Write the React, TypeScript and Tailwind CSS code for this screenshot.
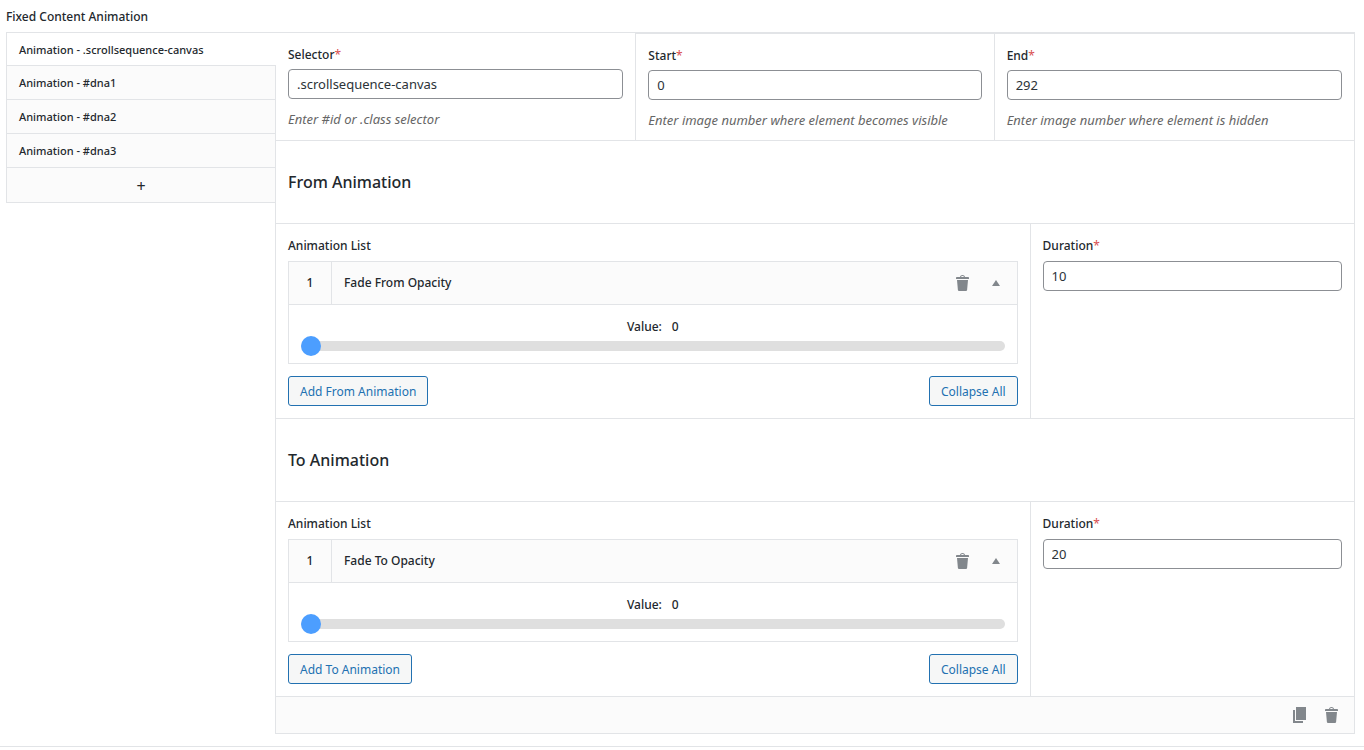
import React, { useState } from "react";

const tabs = ["Animation - .scrollsequence-canvas", "Animation - #dna1", "Animation - #dna2", "Animation - #dna3"];

function TrashIcon() {
  return (
    <svg className="size-5 fill-[#82878c]" viewBox="0 0 20 20" aria-hidden="true">
      <path d="M12 4h3c.6 0 1 .4 1 1v1H3V5c0-.6.5-1 1-1h3c.2-1.1 1.3-2 2.5-2s2.3.9 2.5 2zM8 4h3c-.2-.6-.9-1-1.5-1S8.2 3.4 8 4zM4 7h11l-.9 10.1c0 .5-.5.9-1 .9H5.9c-.5 0-.9-.4-1-.9L4 7z" />
    </svg>
  );
}

function CopyIcon() {
  return (
    <svg className="size-5 fill-[#82878c]" viewBox="0 0 20 20" aria-hidden="true">
      <path d="M6 15V2h10v13H6zm-1 1h8v2H3V5h2v11z" />
    </svg>
  );
}

function ArrowUpIcon() {
  return (
    <svg className="size-5 fill-[#82878c]" viewBox="0 0 20 20" aria-hidden="true">
      <path d="M7 13l4-6 4 6H7z" />
    </svg>
  );
}

type FieldProps = {
  id: string;
  label: string;
  value: string;
  hint?: string;
  labelClass?: string;
};

function Field({ id, label, value, hint, labelClass = "mb-1" }: FieldProps) {
  return (
    <>
      <label htmlFor={id} className={`block font-medium leading-5 ${labelClass}`}>
        {label}
        <span className="font-normal text-[#d94f4f]">*</span>
      </label>
      <input
        id={id}
        type="text"
        defaultValue={value}
        className="block h-[30px] w-full rounded-[4px] border border-[#8c8f94] bg-white px-2 text-[13px] text-[#2c3338]"
      />
      {hint && <p className="mt-2.5 text-[13px] leading-5 text-[#666] italic">{hint}</p>}
    </>
  );
}

function OutlineButton({ children }: { children: React.ReactNode }) {
  return (
    <button type="button" className="h-[30px] rounded-[3px] border border-[#2271b1] bg-[#f6f7f7] px-[11px] pt-0.5 text-[#2271b1]">
      {children}
    </button>
  );
}

type SectionProps = {
  id: string;
  title: string;
  item: string;
  addLabel: string;
  duration: string;
};

function AnimationSection({ id, title, item, addLabel, duration }: SectionProps) {
  const [value, setValue] = useState(0);

  return (
    <section>
      <h2 className="flex h-[83px] items-center border-t border-[#e2e4e7] px-3 text-base font-medium">{title}</h2>

      <div className="grid grid-cols-[7fr_3fr] border-t border-[#e2e4e7]">
        <div className="border-r border-[#e2e4e7] p-3">
          <h3 className="mb-[5px] leading-5 font-medium">Animation List</h3>

          <div className="border border-[#e2e4e7]">
            <div className="flex h-[43px] items-center border-b border-[#e2e4e7] bg-[#fbfbfb] font-medium">
              <span className="flex w-[43px] items-center justify-center self-stretch border-r border-[#e2e4e7]">1</span>
              <span className="flex-1 px-3">{item}</span>
              <div className="flex gap-3 pr-3">
                <button type="button" aria-label="Remove"><TrashIcon /></button>
                <button type="button" aria-label="Collapse"><ArrowUpIcon /></button>
              </div>
            </div>

            <div className="px-3 pt-3 pb-[7px]">
              <label htmlFor={`${id}-value`} className="flex justify-center gap-2.5 leading-[19px] font-medium">
                <span>Value:</span>
                <span>{value}</span>
              </label>
              <input
                id={`${id}-value`}
                type="range"
                min={0}
                max={100}
                value={value}
                onChange={(e) => setValue(Number(e.target.value))}
                className="block h-5 w-full appearance-none bg-transparent [&::-webkit-slider-runnable-track]:h-2.5 [&::-webkit-slider-runnable-track]:rounded-full [&::-webkit-slider-runnable-track]:bg-[#dfdfdf] [&::-webkit-slider-thumb]:-mt-[5px] [&::-webkit-slider-thumb]:size-5 [&::-webkit-slider-thumb]:appearance-none [&::-webkit-slider-thumb]:rounded-full [&::-webkit-slider-thumb]:bg-[#4c9eff]"
              />
            </div>
          </div>

          <div className="mt-3 flex justify-between">
            <OutlineButton>{addLabel}</OutlineButton>
            <OutlineButton>Collapse All</OutlineButton>
          </div>
        </div>

        <div className="p-3">
          <Field id={`${id}-duration`} label="Duration" value={duration} labelClass="mb-[5px]" />
        </div>
      </div>
    </section>
  );
}

export default function App() {
  const [active, setActive] = useState(0);

  return (
    <div className="border-b border-[#e2e4e7] bg-white pt-[7px] pr-[9px] pb-3 pl-1.5 font-['Noto_Sans','Open_Sans',sans-serif] text-[12px] text-[#23282d]">
      <h1 className="mb-[5px] leading-5 font-medium">Fixed Content Animation</h1>

      <div className="flex items-start">
        <nav className="flex w-[270px] shrink-0 flex-col border-t border-[#e2e4e7]">
          {tabs.map((tab, i) => (
            <button
              key={tab}
              type="button"
              onClick={() => setActive(i)}
              className={
                i === active
                  ? "relative z-10 h-[33px] border-b border-l border-[#e2e4e7] bg-white px-3 pt-0.5 text-left text-[11px] font-medium"
                  : "h-[34px] border-x border-b border-[#e2e4e7] bg-[#fbfbfb] px-3 pt-0.5 text-left text-[11px] font-medium"
              }
            >
              {tab}
            </button>
          ))}
          <button type="button" aria-label="Add animation" className="h-[35px] border-x border-b border-[#e2e4e7] bg-[#fbfbfb] pt-0.5 text-base">
            +
          </button>
        </nav>

        {/* Panel of the active animation */}
        <main className="-ml-px min-w-0 flex-1 border border-[#e2e4e7]">
          <div className="grid grid-cols-3">
            <div className="px-3 pt-3 pb-2.5">
              <Field id="selector" label="Selector" value=".scrollsequence-canvas" hint="Enter #id or .class selector" />
            </div>
            <div className="border-x border-t border-[#e2e4e7] px-3 pt-3 pb-2.5">
              <Field id="start" label="Start" value="0" hint="Enter image number where element becomes visible" />
            </div>
            <div className="border-t border-[#e2e4e7] px-3 pt-3 pb-2.5">
              <Field id="end" label="End" value="292" hint="Enter image number where element is hidden" />
            </div>
          </div>

          <AnimationSection id="from" title="From Animation" item="Fade From Opacity" addLabel="Add From Animation" duration="10" />
          <AnimationSection id="to" title="To Animation" item="Fade To Opacity" addLabel="Add To Animation" duration="20" />

          <div className="flex h-[37px] items-center justify-end gap-3 border-t border-[#e2e4e7] bg-[#fbfbfb] pr-3">
            <button type="button" aria-label="Duplicate"><CopyIcon /></button>
            <button type="button" aria-label="Remove animation"><TrashIcon /></button>
          </div>
        </main>
      </div>
    </div>
  );
}
